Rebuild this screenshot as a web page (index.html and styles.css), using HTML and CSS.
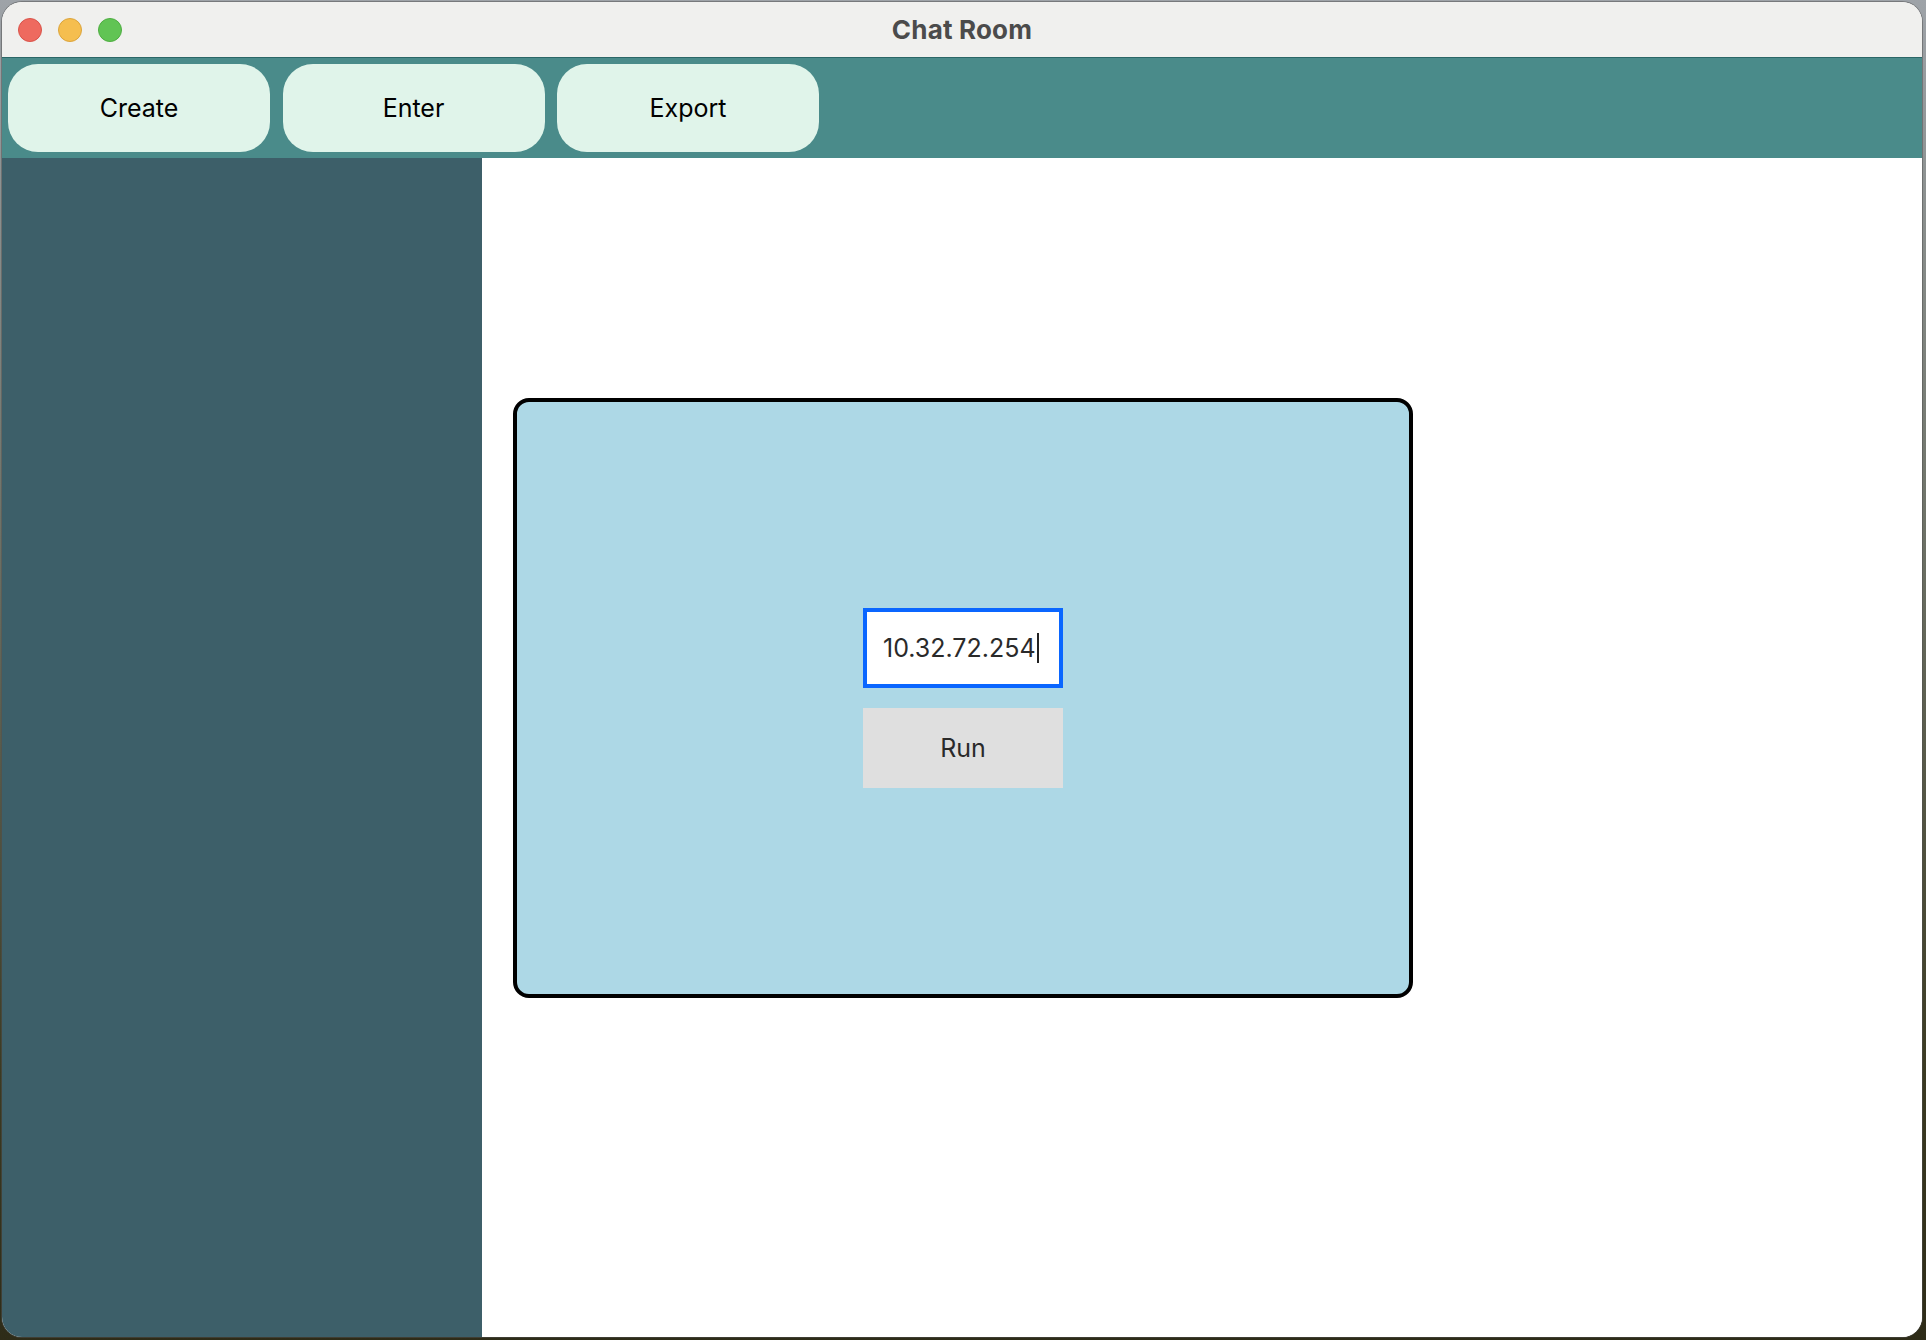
FILE: index.html
```html
<!DOCTYPE html>
<html>
<head>
<meta charset="utf-8">
<title>Chat Room</title>
<link rel="stylesheet" href="styles.css">
</head>
<body>
<div class="window">
  <div class="titlebar">
    <div class="lights">
      <span class="light red"></span>
      <span class="light yellow"></span>
      <span class="light green"></span>
    </div>
    <div class="title">Chat Room</div>
  </div>
  <div class="toolbar">
    <button class="tbtn">Create</button>
    <button class="tbtn">Enter</button>
    <button class="tbtn">Export</button>
  </div>
  <div class="content">
    <aside class="sidebar"></aside>
    <main class="main">
      <div class="card">
        <div class="ipbox"><span class="iptext">10.32.72.254</span><span class="caret"></span></div>
        <button class="run">Run</button>
      </div>
    </main>
  </div>
</div>
</body>
</html>
```
FILE: styles.css
```css
html, body {
  margin: 0;
  padding: 0;
}
body {
  width: 1926px;
  height: 1340px;
  overflow: hidden;
  background: linear-gradient(180deg, #9ea3a8 0%, #6d7166 40%, #3b3a22 80%, #2e2c18 100%);
  font-family: "Inter", "Noto Sans", sans-serif;
}
.window {
  margin: 2px 0 0 2px;
  width: 1920px;
  height: 1335px;
  border-radius: 20px;
  overflow: hidden;
  display: flex;
  flex-direction: column;
  background: #ffffff;
  box-shadow: 0 0 0 1px rgba(80, 80, 80, 0.5);
}
.titlebar {
  position: relative;
  height: 55px;
  flex: 0 0 auto;
  background: #f0f0ee;
  border-bottom: 1px solid #2b6767;
  display: flex;
  align-items: center;
  justify-content: center;
}
.lights {
  position: absolute;
  left: 16px;
  top: 16px;
  display: flex;
  gap: 16px;
}
.light {
  width: 24px;
  height: 24px;
  border-radius: 50%;
  box-sizing: border-box;
}
.red { background: #ee6a5f; border: 1px solid #d9534a; }
.yellow { background: #f5be4f; border: 1px solid #dba43c; }
.green { background: #61c454; border: 1px solid #4ead41; }
.title {
  font-size: 26px;
  font-weight: 700;
  color: #4b4b4b;
  letter-spacing: 0.2px;
}
.toolbar {
  height: 100px;
  flex: 0 0 auto;
  box-sizing: border-box;
  background: #4a8b8a;
  padding: 6px 6px 6px 6px;
  display: flex;
  gap: 12.5px;
}
.tbtn {
  width: 262px;
  height: 88px;
  border: none;
  border-radius: 30px;
  background: #e0f4ea;
  font-family: "Inter", "Noto Sans", sans-serif;
  font-size: 25px;
  color: #000;
  padding: 0;
}
.content {
  flex: 1 1 auto;
  display: flex;
  min-height: 0;
}
.sidebar {
  width: 480px;
  flex: 0 0 auto;
  background: #3d5f69;
}
.main {
  flex: 1 1 auto;
  background: #ffffff;
  padding: 240px 0 0 31px;
}
.card {
  width: 900px;
  height: 600px;
  box-sizing: border-box;
  border: 4px solid #000;
  border-radius: 16px;
  background: #add8e6;
  display: flex;
  flex-direction: column;
  align-items: center;
  justify-content: center;
  gap: 20px;
}
.ipbox {
  width: 200px;
  height: 80px;
  box-sizing: border-box;
  border: 4px solid #0a66ff;
  background: #fff;
  display: flex;
  align-items: center;
  padding-left: 16px;
}
.iptext {
  font-size: 25px;
  color: #2a2a2a;
}
.caret {
  width: 2px;
  height: 30px;
  background: #222;
  margin-left: 1px;
}
.run {
  width: 200px;
  height: 80px;
  border: none;
  border-radius: 0;
  background: #dfdfdf;
  font-family: "Inter", "Noto Sans", sans-serif;
  font-size: 25px;
  color: #2a2a2a;
  padding: 0;
}
```
